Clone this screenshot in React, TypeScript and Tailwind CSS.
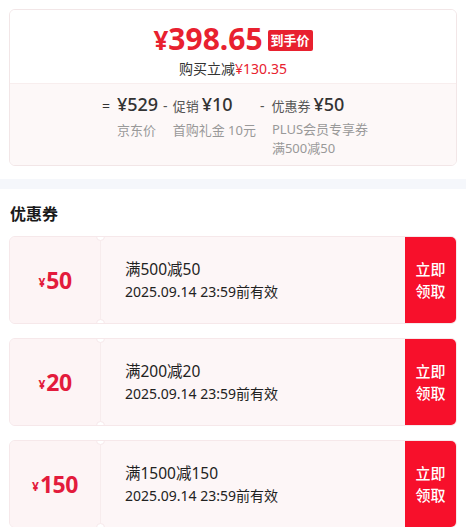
const coupons = [
  { amount: '50', title: '满500减50', expire: '2025.09.14 23:59前有效' },
  { amount: '20', title: '满200减20', expire: '2025.09.14 23:59前有效' },
  { amount: '150', title: '满1500减150', expire: '2025.09.14 23:59前有效' }
]

function Coupon({ amount, title, expire }: { amount: string; title: string; expire: string }) {
  return (
    <div className="relative flex h-[88px] overflow-hidden rounded-md border border-[#f6e8ea] bg-[#fdf6f7]">
      <div className="flex w-[91px] shrink-0 items-center justify-center border-r border-[#f7eced] bg-[#fdf4f5] text-[#e31b3c]">
        <span className="mr-[1px] mt-[5px] text-[12px] font-bold">¥</span>
        <span className="text-[23px] font-bold leading-none tracking-[-0.5px]">{amount}</span>
      </div>
      <div className="flex flex-1 flex-col justify-center pl-[24px] text-[#222]">
        <div className="text-[15.5px] leading-[24px]">{title}</div>
        <div className="text-[14px] leading-[22px]">{expire}</div>
      </div>
      <div className="flex w-[51px] shrink-0 items-center justify-center bg-[#f7102b] text-center text-[15px] font-medium leading-[22px] text-white">
        立即
        <br />
        领取
      </div>
      <span className="absolute left-[86px] top-[-5px] h-[9px] w-[9px] rounded-full border border-[#f6e8ea] bg-white" />
      <span className="absolute bottom-[-5px] left-[86px] h-[9px] w-[9px] rounded-full border border-[#f6e8ea] bg-white" />
    </div>
  )
}

export default function App() {
  return (
    <div
      className="min-h-[527px] w-[466px] overflow-hidden bg-white"
      style={{ fontFamily: '"Noto Sans", "Noto Sans CJK SC", sans-serif' }}
    >
      <div className="px-[9px] pt-[9px]">
        <div className="overflow-hidden rounded-md border border-[#f2e6e7]">
          <div className="flex flex-col items-center border-b border-[#f8eeee] bg-white pb-[3px] pt-[11px]">
            <div className="flex items-center">
              <span className="text-[30px] font-bold leading-[36px] text-[#e8212f]">
                <span className="text-[26px]">¥</span>398.65
              </span>
              <span className="ml-[5px] mt-[2px] rounded-[2px] bg-[#e8212f] px-[3px] text-[13px] font-bold leading-[21px] text-white">
                到手价
              </span>
            </div>
            <div className="text-[14px] leading-[22px] text-[#333]">
              购买立减<span className="text-[#e8212f]">¥130.35</span>
            </div>
          </div>
          <div className="flex justify-center bg-[#fdf8f8] pb-[7px] pl-[4px] pt-[7px]">
            <div className="flex flex-col">
              <div className="flex items-baseline leading-[26px] text-[#333]">
                <span className="mr-[7px] text-[14px]">=</span>
                <span className="text-[18px] font-medium">¥529</span>
                <span className="ml-[5px] text-[14px] text-[#555]">-</span>
              </div>
              <div className="pl-[15px] text-[13px] leading-[22px] text-[#999]">京东价</div>
            </div>
            <div className="ml-[5px] flex flex-col">
              <div className="flex items-baseline leading-[26px] text-[#333]">
                <span className="mr-[3px] text-[13px] text-[#555]">促销</span>
                <span className="text-[18px] font-medium">¥10</span>
              </div>
              <div className="whitespace-nowrap text-[13px] leading-[22px] text-[#999]">首购礼金 10元</div>
            </div>
            <div className="ml-[4px] flex flex-col">
              <div className="flex items-baseline leading-[26px] text-[#333]">
                <span className="mr-[7px] text-[14px] text-[#555]">-</span>
                <span className="mr-[3px] text-[13px] text-[#555]">优惠券</span>
                <span className="text-[18px] font-medium">¥50</span>
              </div>
              <div className="pl-[12px] text-[13px] leading-[19px] text-[#999]">
                <div className="whitespace-nowrap pt-[1px]">PLUS会员专享券</div>
                <div className="whitespace-nowrap">满500减50</div>
              </div>
            </div>
          </div>
        </div>
      </div>
      <div className="mt-[13px] h-[10px] bg-[#f5f7fb]" />
      <div className="px-[9px]">
        <div className="pb-[11px] pl-[1px] pt-[14px] text-[16px] font-bold leading-[22px] text-[#1a1a1a]">
          优惠券
        </div>
        <div className="flex flex-col gap-[14px]">
          {coupons.map((c) => (
            <Coupon key={c.title} {...c} />
          ))}
        </div>
      </div>
    </div>
  )
}
